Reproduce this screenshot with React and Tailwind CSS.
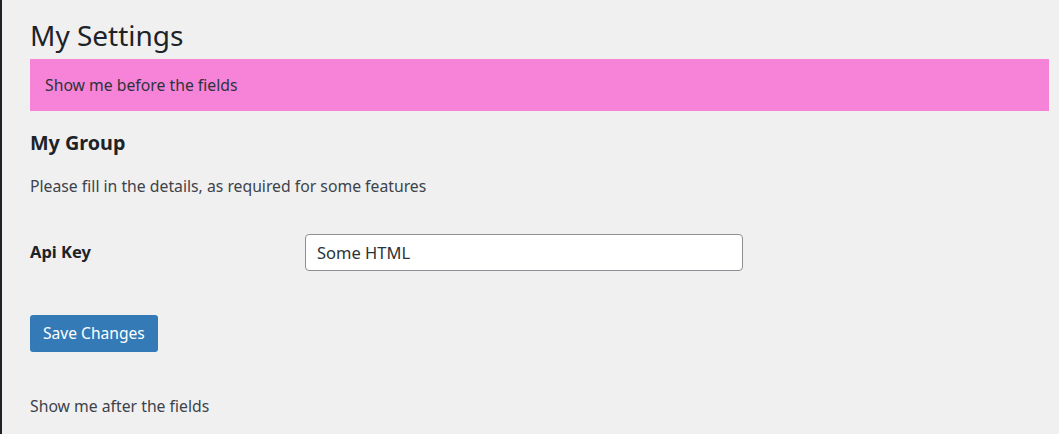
import React from "react";

const App = () => {
  return (
    <div
      className="flex min-h-[434px] bg-[#f0f0f1] text-[#3c434a]"
      style={{ fontFamily: '"Noto Sans", "Open Sans", sans-serif' }}
    >
      <div className="w-[2px] shrink-0 bg-[#1d2327]" />
      <div className="flex-1 pl-[28px] pr-[10px]">
        <h1 className="pt-[18px] pb-[1px] text-[28px] leading-[34px] font-normal text-[#1d2327]">
          My Settings
        </h1>
        <div className="mt-[6px] h-[52px] flex items-center bg-[#f783d8] px-[15px] pt-[2px] text-[15.75px] text-[#2c3338]">
          Show me before the fields
        </div>

        <h2 className="mt-[20px] text-[19.75px] leading-[24px] font-bold text-[#1d2327]">
          My Group
        </h2>
        <p className="mt-[20px] text-[15.75px] leading-[22px]">
          Please fill in the details, as required for some features
        </p>

        <div className="mt-[37px] flex items-center">
          <label className="w-[275px] text-[16.5px] font-bold text-[#1d2327]">
            Api Key
          </label>
          <input
            type="text"
            defaultValue="Some HTML"
            className="h-[37px] w-[438px] rounded-[4px] border border-[#8c8f94] bg-white px-[11px] text-[16.5px] text-[#2c3338] outline-none"
          />
        </div>

        <div className="mt-[44px]">
          <button className="h-[37px] rounded-[3px] bg-[#337ab7] px-[13px] text-[15.6px] text-white">
            Save Changes
          </button>
        </div>

        <p className="mt-[43px] text-[15.75px] leading-[22px]">
          Show me after the fields
        </p>
      </div>
    </div>
  );
};

export default App;
